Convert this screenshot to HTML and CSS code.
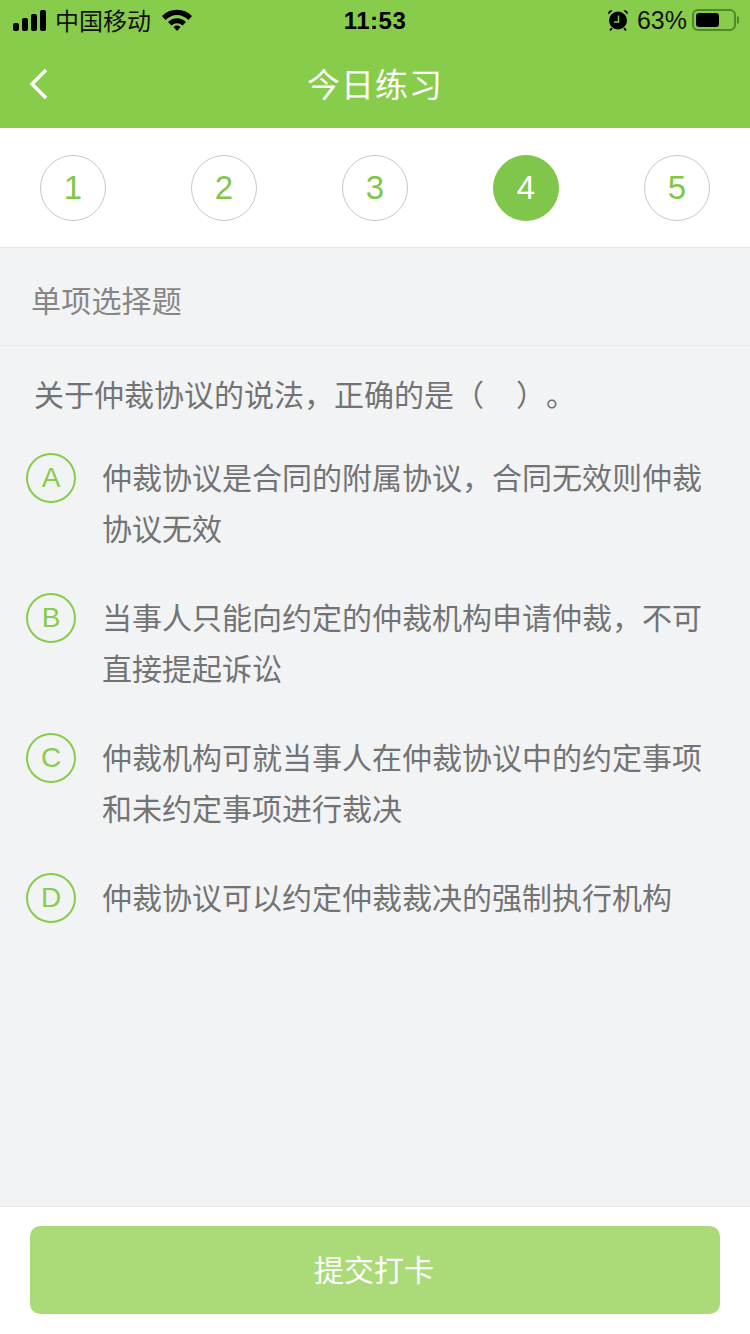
FILE: index.html
```html
<!DOCTYPE html>
<html lang="zh-CN">

<head>
  <meta charset="UTF-8">
  <title>今日练习</title>
  <link rel="stylesheet" href="styles.css">
</head>

<body>
  <div class="page">
    <div class="header">
      <div class="status">
        <div class="status__left">
          <svg class="signal" width="33" height="21" viewBox="0 0 33 21">
            <rect x="0" y="13" width="6" height="8" rx="2" />
            <rect x="9" y="8" width="6" height="13" rx="2" />
            <rect x="18" y="4" width="6" height="17" rx="2" />
            <rect x="27" y="0" width="6" height="21" rx="2" />
          </svg>
          <span class="carrier">中国移动</span>
          <svg class="wifi" width="30" height="22" viewBox="0 0 30 22">
            <path d="M0 7 A21 21 0 0 1 30 7 L26.5 11 A16 16 0 0 0 3.5 11 Z" />
            <path d="M6 13 A12.5 12.5 0 0 1 24 13 L20.5 16.5 A8 8 0 0 0 9.5 16.5 Z" />
            <path d="M11.5 18 A5.5 5.5 0 0 1 18.5 18 L15 22 Z" />
          </svg>
        </div>
        <span class="status__time">11:53</span>
        <div class="status__right">
          <svg class="alarm" width="22" height="22" viewBox="0 0 22 22">
            <circle cx="11" cy="11.5" r="9" fill="#000" />
            <path d="M1.5 5.5 L5.5 1.5 A3 3 0 0 0 1.5 5.5 Z" />
            <path d="M20.5 5.5 L16.5 1.5 A3 3 0 0 1 20.5 5.5 Z" />
            <path d="M5 19 L3 21.5 M17 19 L19 21.5" stroke="#000" stroke-width="1.8" />
            <path d="M11.5 6.5 V13 H7" fill="none" stroke="#88cc4b" stroke-width="1.4" />
          </svg>
          <span class="battery-text">63%</span>
          <div class="battery">
            <div class="battery__level" style="width: 64%"></div>
          </div>
          <div class="battery__tip"></div>
        </div>
      </div>
      <div class="nav">
        <svg class="nav__back" width="20" height="32" viewBox="0 0 20 32">
          <path d="M17 2 L3 16 L17 30" />
        </svg>
        <span class="nav__title">今日练习</span>
      </div>
    </div>

    <div class="steps">
      <div class="step">1</div>
      <div class="step">2</div>
      <div class="step">3</div>
      <div class="step step--active">4</div>
      <div class="step">5</div>
    </div>

    <div class="type">单项选择题</div>

    <div class="question">
      <div class="question__title">关于仲裁协议的说法，正确的是（<span class="question__blank"></span>）。</div>
      <div class="option">
        <div class="option__mark">A</div>
        <div class="option__text">仲裁协议是合同的附属协议，合同无效则仲裁协议无效</div>
      </div>
      <div class="option">
        <div class="option__mark">B</div>
        <div class="option__text">当事人只能向约定的仲裁机构申请仲裁，不可直接提起诉讼</div>
      </div>
      <div class="option">
        <div class="option__mark">C</div>
        <div class="option__text">仲裁机构可就当事人在仲裁协议中的约定事项和未约定事项进行裁决</div>
      </div>
      <div class="option">
        <div class="option__mark">D</div>
        <div class="option__text">仲裁协议可以约定仲裁裁决的强制执行机构</div>
      </div>
    </div>

    <div class="footer">
      <button class="submit" type="button">提交打卡</button>
    </div>
  </div>
</body>

</html>
```

FILE: styles.css
```css
* {
  margin: 0;
  padding: 0;
  box-sizing: border-box;
  font-family: "Liberation Sans", "Noto Sans CJK SC", sans-serif;
}

body {
  background-color: #f2f3f5;
}

.page {
  display: flex;
  flex-direction: column;
  width: 750px;
  height: 1334px;
  overflow: hidden;
}

.header {
  height: 128px;
  background-color: #88cc4b;
}

.status {
  display: flex;
  align-items: center;
  justify-content: space-between;
  height: 40px;
  padding: 0 11px 0 13px;
}

.status__left,
.status__right {
  display: flex;
  align-items: center;
  width: 200px;
}

.status__right {
  justify-content: flex-end;
}

.carrier {
  margin-left: 9px;
  margin-bottom: 2px;
  font-size: 24px;
  color: #111;
}

.wifi {
  margin-left: 11px;
}

.status__time {
  margin-top: 2px;
  margin-right: 2px;
  font-size: 24px;
  font-weight: 700;
  letter-spacing: 0.5px;
  color: #000;
}

.alarm {
  margin-bottom: 1px;
}

.battery-text {
  margin-left: 8px;
  font-size: 25px;
  color: #111;
}

.battery {
  width: 44px;
  height: 22px;
  margin-left: 5px;
  padding: 2px;
  border: 2px solid #4d8a2a;
  border-radius: 6px;
}

.battery__level {
  height: 100%;
  background-color: #000;
  border-radius: 3px;
}

.battery__tip {
  width: 2px;
  height: 8px;
  margin-left: 1px;
  background-color: #4d8a2a;
  border-radius: 0 2px 2px 0;
}

.nav {
  position: relative;
  display: flex;
  align-items: center;
  justify-content: center;
  height: 88px;
  padding-bottom: 3px;
}

.nav__back {
  position: absolute;
  left: 29px;
  top: 28px;
  fill: none;
  stroke: #fff;
  stroke-width: 3.5;
}

.nav__title {
  font-size: 33px;
  letter-spacing: 1px;
  color: #fff;
}

.steps {
  display: flex;
  align-items: center;
  justify-content: space-between;
  height: 120px;
  padding: 0 40px;
  background-color: #fff;
  border-bottom: 1px solid #e8e9eb;
}

.step {
  display: flex;
  align-items: center;
  justify-content: center;
  width: 66px;
  height: 66px;
  font-size: 33px;
  color: #7fc64a;
  border: 1px solid #c9c9c9;
  border-radius: 50%;
}

.step--active {
  color: #fff;
  background-color: #7fc64a;
  border-color: #7fc64a;
}

.type {
  height: 98px;
  padding-left: 31px;
  font-size: 30px;
  line-height: 108px;
  letter-spacing: 0.2px;
  color: #868686;
  border-bottom: 1px solid #e8e9eb;
}

.question {
  flex: 1;
  padding: 25px 26px 0;
}

.question__title {
  padding-left: 8px;
  margin-bottom: 32px;
  font-size: 30px;
  line-height: 50px;
  color: #737373;
  text-spacing-trim: space-all;
}

.question__blank {
  display: inline-block;
  width: 32px;
}

.option {
  display: flex;
  align-items: flex-start;
  margin-bottom: 38px;
}

.option__mark {
  flex: none;
  display: flex;
  align-items: center;
  justify-content: center;
  width: 50px;
  height: 50px;
  font-size: 28px;
  color: #88cc4b;
  border: 2px solid #88cc4b;
  border-radius: 50%;
}

.option__text {
  margin-left: 26px;
  width: 605px;
  font-size: 30px;
  line-height: 51px;
  color: #737373;
}

.footer {
  height: 128px;
  padding: 19px 30px;
  background-color: #fff;
  border-top: 1px solid #e8e9eb;
}

.submit {
  display: block;
  width: 100%;
  height: 88px;
  padding: 0 2px 4px 0;
  font-size: 30px;
  color: #fff;
  background-color: #aadb78;
  border: none;
  border-radius: 10px;
}
```
